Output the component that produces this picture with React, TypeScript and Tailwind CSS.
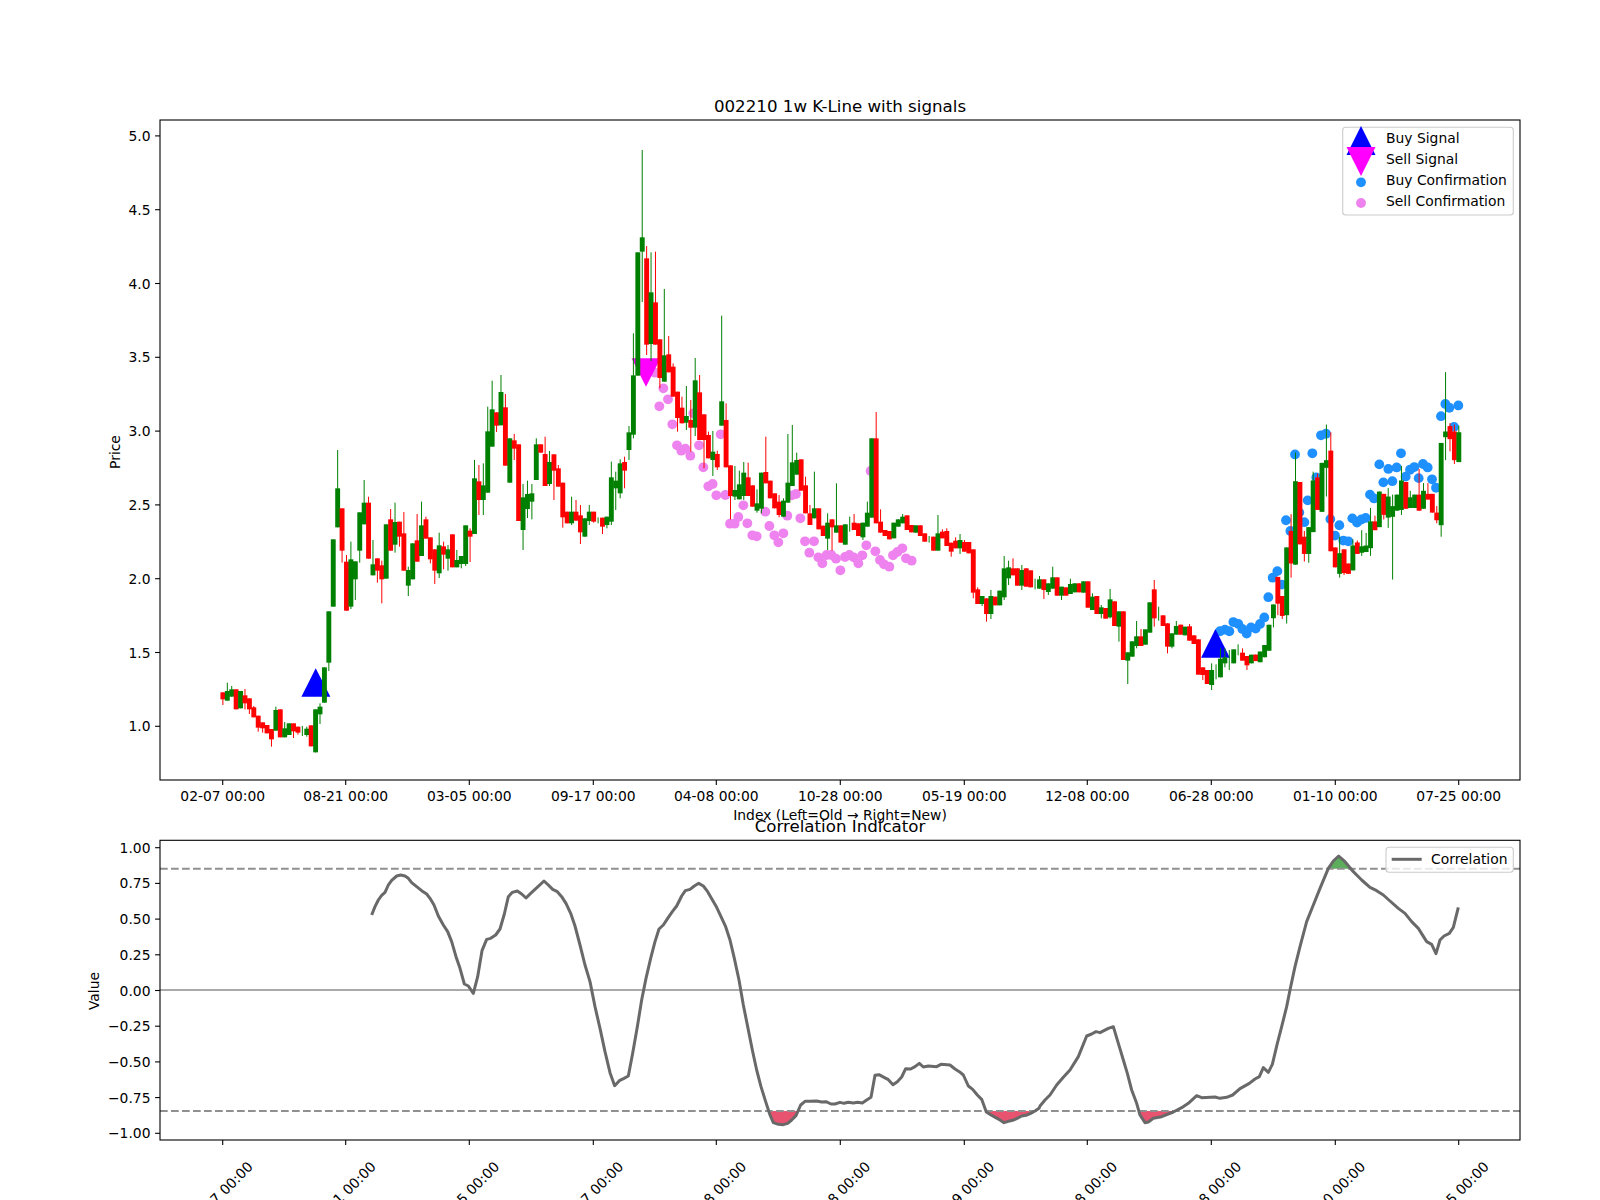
/**
 * Chart page: weekly K-line with signals, correlation indicator below
 * Readings are taken from crops, hence the origin/scale on each block
 */
import React from 'react'

type Candle = [string, number, number, number?, number?]

interface CandleBlock {
  y0: number
  sy: number
  rows: Candle[]
}

const PLOT_LEFT = 160
const PLOT_RIGHT = 1520
const FIRST_X = 222.9
const STEP_X = 4.414

const TICK_LABELS = [
  '02-07 00:00',
  '08-21 00:00',
  '03-05 00:00',
  '09-17 00:00',
  '04-08 00:00',
  '10-28 00:00',
  '05-19 00:00',
  '12-08 00:00',
  '06-28 00:00',
  '01-10 00:00',
  '07-25 00:00',
]
const TICK_XS = [222.7, 345.7, 469.3, 593.3, 716.3, 840.3, 964.3, 1087.3, 1211.3, 1335.3, 1458.7]

const PRICE_TICKS = ['1.0', '1.5', '2.0', '2.5', '3.0', '3.5', '4.0', '4.5', '5.0']
const CORR_TICKS = ['1.00', '0.75', '0.50', '0.25', '0.00', '−0.25', '−0.50', '−0.75', '−1.00']

const BLOCKS: CandleBlock[] = [
  {
    y0: 340,
    sy: 3,
    rows: [
      ['r', 1057, 1078, 0, 1095], ['g', 1053, 1082, 1028], ['g', 1048, 1070, 1038], ['r', 1048, 1108],
      ['g', 1053, 1105], ['r', 1066, 1090, 1047, 1108], ['r', 1075, 1108, 0, 1122], ['r', 1102, 1132, 1098],
      ['r', 1127, 1163, 0, 1175], ['r', 1147, 1165, 0, 1178], ['r', 1155, 1180], ['r', 1167, 1198, 0, 1220],
      ['g', 1110, 1172, 1100], ['r', 1108, 1192], ['g', 1165, 1192, 1146], ['g', 1150, 1185],
      ['r', 1150, 1174, 0, 1194], ['r', 1160, 1178, 0, 1184], ['g', 1175, 1175, 1158, 1188], ['g', 1166, 1185, 1160, 1190],
      ['r', 1156, 1219], ['g', 1108, 1237], ['g', 1100, 1123, 1090, 1152], ['g', 982, 1088],
      ['g', 814, 968, 0, 993], ['g', 598, 800], ['g', 445, 562, 330], ['r', 505, 632, 0, 668],
      ['r', 665, 812, 645], ['g', 658, 800, 605, 807], ['g', 664, 718, 0, 780], ['g', 517, 632, 0, 668],
      ['g', 488, 553, 420], ['r', 488, 656, 470], ['g', 673, 706, 600], ['r', 655, 692, 0, 728],
      ['r', 676, 718, 662, 790], ['g', 553, 716], ['r', 538, 632, 507], ['g', 546, 614, 488, 638],
      ['r', 545, 590, 0, 620], ['r', 580, 692, 516], ['g', 690, 737, 680, 768], ['g', 610, 718],
      ['r', 601, 665, 522], ['g', 556, 648, 485], ['r', 538, 596, 530], ['r', 592, 658, 0, 670],
      ['r', 628, 692, 0, 732], ['g', 616, 700, 578, 714], ['r', 619, 644, 605, 688], ['g', 628, 656, 615, 692],
      ['r', 583, 682], ['g', 660, 682, 630], ['g', 648, 672, 0, 685], ['g', 556, 672, 0, 678],
      ['r', 572, 590, 565, 666], ['g', 415, 582, 360], ['r', 424, 480, 375, 525], ['g', 436, 480, 370, 525],
      ['g', 274, 458, 200], ['g', 208, 320, 122], ['r', 217, 257, 0, 276], ['g', 156, 256, 105],
      ['r', 202, 377, 162], ['g', 295, 428], ['r', 301, 326, 282, 360], ['r', 313, 543],
      ['g', 472, 570, 432, 630], ['g', 462, 507, 422, 534], ['g', 460, 485, 432, 538], ['g', 313, 420, 295],
    ],
  },
  {
    y0: 130,
    sy: 3,
    rows: [
      ['r', 943, 968], ['r', 972, 1068, 920], ['g', 996, 1062, 963, 1068], ['r', 973, 1022, 0, 1110],
      ['r', 1015, 1070, 1005], ['r', 1058, 1162, 0, 1193], ['r', 1145, 1180], ['g', 1145, 1180, 1100, 1185],
      ['r', 1145, 1172, 1110], ['r', 1156, 1207, 1125, 1242], ['g', 1165, 1220], ['g', 1145, 1173, 1125, 1185],
      ['r', 1145, 1175, 0, 1178], ['g', 1170, 1170, 1162, 1180], ['r', 1163, 1190, 0, 1212], ['g', 1160, 1185, 0, 1195],
      ['g', 1042, 1175, 995, 1185], ['g', 1052, 1075, 1025, 1140], ['g', 1000, 1090, 988, 1105], ['r', 996, 1022, 980, 1075],
      ['g', 907, 960, 888, 990], ['g', 736, 914, 610, 925], ['g', 367, 737], ['g', 322, 365, 60, 516],
      ['r', 385, 644, 348, 675], ['g', 487, 642, 367, 693], ['r', 517, 644, 365], ['r', 628, 744, 0, 775],
      ['g', 676, 755, 477], ['r', 673, 727, 618], ['r', 710, 800, 700], ['r', 785, 864, 0, 905],
      ['r', 833, 880, 800], ['g', 858, 878, 768, 900], ['r', 870, 893, 810, 965], ['g', 751, 893, 684, 918],
      ['r', 787, 930, 735], ['r', 853, 930, 0, 1015], ['r', 915, 985, 905], ['g', 965, 990, 903, 1038],
      ['r', 972, 1012, 962, 1020], ['g', 814, 887, 557], ['r', 870, 1012, 820], ['r', 1006, 1098, 0, 1168],
      ['g', 1080, 1100, 1008, 1110], ['g', 1063, 1108, 1022], ['g', 1028, 1098, 996, 1110], ['r', 1042, 1098, 998],
      ['r', 1066, 1130], ['g', 1120, 1142, 1078, 1148], ['g', 1028, 1136, 0, 1150], ['r', 1026, 1060, 920],
      ['r', 1052, 1105], ['r', 1090, 1135], ['r', 1115, 1155, 1095, 1162], ['g', 1112, 1160, 1105],
      ['g', 1058, 1118, 912], ['g', 997, 1068, 885], ['g', 990, 1034, 968], ['r', 988, 1082],
      ['r', 1066, 1150, 1040], ['r', 1150, 1185, 1125], ['g', 1135, 1165, 1025], ['r', 1135, 1198],
      ['r', 1187, 1218], ['g', 1178, 1226, 1150, 1260], ['r', 1168, 1192, 0, 1262], ['g', 1186, 1208, 1060],
      ['r', 1186, 1238], ['g', 1183, 1244], ['g', 1180, 1180, 1160, 1205], ['r', 1178, 1200, 1152],
      ['r', 1180, 1218], ['g', 1178, 1222, 0, 1230], ['g', 1148, 1190, 1115], ['g', 925, 1163],
      ['r', 925, 1180, 846], ['r', 1175, 1208, 1138], ['r', 1200, 1218], ['r', 1203, 1228],
      ['g', 1178, 1225], ['g', 1168, 1190], ['g', 1160, 1180, 1152], ['r', 1156, 1200],
      ['r', 1185, 1207], ['g', 1186, 1208], ['r', 1186, 1218], ['r', 1210, 1235],
      ['g', 1228, 1228, 1218, 1238], ['r', 1220, 1262], ['g', 1210, 1262, 1155],
    ],
  },
  {
    y0: 430,
    sy: 3,
    rows: [
      ['r', 305, 325, 298], ['r', 303, 348, 295], ['r', 338, 365, 0, 380], ['r', 332, 355, 322],
      ['g', 330, 355, 312, 372], ['r', 336, 365, 330], ['r', 336, 370], ['r', 358, 488, 0, 505],
      ['r', 478, 522, 472], ['g', 498, 522, 0, 528], ['r', 505, 552, 0, 575], ['g', 498, 552, 480, 567],
      ['r', 500, 526], ['g', 482, 526], ['g', 415, 502, 378, 510], ['g', 412, 445, 392, 465],
      ['r', 415, 436, 385], ['r', 415, 467], ['g', 420, 467, 405, 480], ['r', 415, 470],
      ['r', 421, 472], ['g', 462, 462, 446, 478], ['g', 448, 476, 438], ['r', 448, 480, 0, 507],
      ['g', 460, 486, 0, 495], ['g', 442, 476, 410], ['r', 442, 497], ['g', 470, 497, 0, 510],
      ['r', 472, 497], ['g', 462, 492, 446], ['g', 460, 487], ['r', 460, 487],
      ['g', 454, 488], ['r', 454, 533], ['g', 500, 540, 490], ['r', 498, 552],
      ['g', 532, 552, 525, 565], ['r', 534, 566], ['g', 508, 562, 477, 565], ['r', 514, 588],
      ['g', 544, 590, 0, 635], ['r', 544, 690], ['g', 667, 692, 0, 762], ['g', 634, 680],
      ['g', 619, 648, 573, 655], ['r', 619, 648, 597], ['g', 598, 644], ['g', 517, 608],
      ['r', 478, 565, 450, 590], ['g', 550, 550, 530, 572], ['r', 556, 588], ['r', 580, 650, 0, 670],
      ['g', 610, 650, 0, 655], ['g', 588, 614, 573], ['r', 584, 614], ['g', 590, 616],
      ['r', 589, 632, 582], ['r', 616, 642], ['r', 628, 734], ['r', 712, 735, 0, 750],
      ['r', 720, 762], ['g', 720, 765, 700, 780], ['g', 725, 725, 703, 748], ['g', 686, 742, 655],
      ['g', 682, 700, 655, 712], ['g', 690, 690, 660, 720], ['g', 658, 700], ['g', 660, 660, 643, 676],
      ['r', 668, 692, 655], ['r', 678, 706, 0, 720], ['g', 674, 700],
    ],
  },
  {
    y0: 110,
    sy: 2.613,
    rows: [
      ['r', 1423, 1440], ['g', 1415, 1443], ['g', 1398, 1430], ['g', 1345, 1413],
      ['g', 1292, 1328, 0, 1352], ['r', 1220, 1290, 0, 1320], ['r', 1270, 1322, 0, 1330], ['g', 1143, 1320, 0, 1342],
      ['r', 1100, 1185, 1056, 1222], ['g', 970, 1188, 895], ['r', 972, 1135], ['r', 1115, 1160, 1100, 1180],
      ['g', 1090, 1160, 0, 1183], ['g', 968, 1103, 945], ['r', 960, 1045, 950], ['g', 922, 1050],
      ['g', 915, 935, 822, 1010], ['r', 890, 1153, 842], ['r', 1143, 1195], ['g', 1158, 1212, 1115, 1222],
      ['r', 1148, 1210, 0, 1215], ['r', 1185, 1212], ['g', 1138, 1203, 1122], ['r', 1130, 1160, 1125],
      ['g', 1140, 1157, 1098, 1165], ['g', 1138, 1155, 1105], ['g', 1075, 1145, 1040, 1165], ['r', 1075, 1098, 1060],
      ['g', 997, 1090], ['r', 1003, 1058, 0, 1070], ['g', 1010, 1065, 988, 1092], ['g', 1035, 1063, 1005, 1227],
      ['g', 1005, 1047], ['g', 968, 1045, 930, 1058], ['r', 972, 1042], ['g', 1012, 1040, 995],
      ['g', 1005, 1040], ['r', 1005, 1047, 938], ['g', 995, 1042, 975], ['r', 1003, 1018, 975],
      ['r', 1003, 1052], ['r', 1052, 1072, 1035, 1080], ['g', 870, 1085, 0, 1115], ['g', 840, 855, 685, 915],
      ['r', 826, 860, 818, 892], ['r', 840, 915, 822, 925], ['g', 842, 920, 825],
    ],
  },
]

const BUY_DOTS: [number, number][] = [
  [60, 1362], [75, 1358], [88, 1362], [100, 1338], [115, 1343], [127, 1356], [140, 1368], [153, 1352], [167, 1355],
  [180, 1343], [193, 1326], [205, 1273], [218, 1222], [232, 1205], [245, 1240], [258, 1072], [271, 1100], [285, 900],
  [298, 1052], [313, 1077], [323, 1020], [337, 897], [349, 960], [363, 850], [378, 846], [391, 1069], [405, 1112],
  [418, 1085], [430, 1125], [445, 1127], [457, 1067], [471, 1078], [484, 1070], [497, 1066], [510, 1005], [522, 1015],
  [538, 926], [550, 973], [565, 938], [577, 970], [590, 934], [603, 897], [617, 958], [630, 940], [643, 933],
  [656, 962], [669, 925], [683, 934], [696, 965], [708, 987], [723, 800], [736, 768], [748, 778], [762, 828], [775, 772],
]

const SELL_DOTS: [number, number][] = [
  [345, 728], [370, 775], [384, 808], [358, 829], [397, 883], [460, 850], [411, 946], [424, 962], [436, 956],
  [451, 977], [477, 946], [542, 913], [490, 1012], [505, 1069], [518, 1062], [529, 1096], [556, 1095], [570, 1181],
  [584, 1181], [595, 1161], [622, 1180], [610, 1126], [637, 1216], [650, 1219], [676, 1145], [688, 1188], [703, 1216],
  [730, 1210], [715, 1237], [742, 1157], [768, 1092], [755, 1096], [781, 1165], [795, 1234], [822, 1234], [808, 1268],
  [835, 1282], [847, 1300], [860, 1275], [874, 1275], [888, 1286], [901, 1321], [915, 1281], [928, 1275], [941, 1282],
  [955, 1300], [967, 1276], [979, 1246], [992, 1023], [1006, 1264], [1020, 1290], [1032, 1303], [1048, 1310],
  [1059, 1276], [1072, 1266], [1087, 1255], [1098, 1285], [1115, 1292],
]

// Correlation line, one list per crop
const CORR_A: [number, number][] = [
  [875, 435], [885, 410], [895, 390], [905, 376], [915, 367], [925, 345], [935, 331], [950, 318], [962, 315], [975, 318],
  [985, 325], [995, 338], [1010, 350], [1025, 362], [1040, 372], [1050, 385], [1062, 405], [1075, 438], [1090, 465],
  [1103, 485], [1115, 515], [1128, 560], [1140, 595], [1153, 642], [1165, 648], [1180, 670], [1193, 620], [1206, 542],
  [1220, 508], [1232, 505], [1247, 495], [1260, 477], [1273, 432], [1285, 380], [1297, 367], [1312, 363], [1325, 372],
  [1338, 384], [1352, 370], [1365, 358], [1392, 333], [1405, 345], [1418, 358], [1432, 365], [1445, 380], [1458, 400],
  [1472, 430], [1485, 468], [1500, 525],
]
const CORR_B: [number, number][] = [
  [75, 405], [90, 455], [105, 530], [120, 595], [135, 665], [150, 728], [164, 767], [178, 752], [192, 745], [205, 738],
  [218, 670], [232, 590], [245, 510], [258, 445], [272, 385], [285, 335], [297, 297], [310, 285], [323, 265], [337, 245],
  [350, 228], [365, 198], [376, 182], [390, 178], [403, 168], [416, 160], [430, 168], [443, 185], [456, 208], [470, 232],
  [483, 260], [497, 290], [510, 330], [523, 385], [537, 450], [550, 525], [563, 590], [577, 660], [590, 720], [603, 770],
  [617, 815], [630, 855], [640, 878], [655, 883], [670, 884], [683, 880], [695, 870], [708, 857], [722, 825], [735, 814],
  [750, 814], [770, 813], [785, 816], [798, 815], [813, 822], [825, 822], [840, 817], [852, 820], [865, 817], [880, 819],
  [893, 817], [907, 819], [920, 810], [933, 802], [945, 736], [957, 734], [972, 742], [985, 749], [999, 764], [1012, 755],
  [1025, 741], [1037, 716], [1052, 717], [1065, 710], [1078, 700], [1090, 711], [1105, 708], [1130, 710], [1143, 703],
  [1170, 705], [1185, 717], [1198, 725], [1210, 735], [1225, 768], [1238, 778], [1252, 795], [1265, 808], [1279, 846],
  [1293, 855], [1306, 862], [1320, 870], [1332, 878], [1345, 874], [1358, 871], [1370, 866], [1385, 858], [1398, 856],
  [1412, 850], [1425, 843], [1437, 835],
]
const CORR_C: [number, number][] = [
  [0, 828], [15, 810], [30, 795], [50, 765], [70, 742], [90, 720], [115, 680], [140, 618], [155, 612], [168, 605],
  [180, 608], [205, 595], [220, 590], [235, 640], [250, 690], [262, 730], [275, 780], [290, 820], [300, 855], [315, 878],
  [325, 876], [340, 865], [365, 860], [400, 846], [425, 833], [445, 820], [470, 797], [485, 803], [525, 801], [540, 805],
  [560, 802], [578, 795], [600, 776], [628, 760], [645, 747], [658, 740], [670, 713], [685, 727], [697, 703], [712, 640],
  [725, 590], [740, 530], [750, 480], [765, 410], [780, 350], [800, 275], [820, 225], [840, 175], [865, 115], [880, 93],
  [896, 78], [915, 95], [940, 125], [965, 150], [990, 172], [1010, 182], [1030, 195], [1050, 213], [1075, 235],
  [1095, 250], [1115, 275], [1135, 295], [1160, 335], [1175, 343], [1188, 371], [1200, 330], [1212, 318], [1228, 310],
  [1240, 292], [1255, 232],
]

const CORR_LINE: [number, number][] = [
  ...CORR_A.map(([x, y]): [number, number] => [80 + x / 3, 770 + y / 3]),
  ...CORR_B.map(([x, y]): [number, number] => [560 + x / 3, 830 + y / 3]),
  ...CORR_C.map(([x, y]): [number, number] => [1040 + x / 3, 830 + y / 3]),
]

const UPPER_Y = 868.7
const LOWER_Y = 1111

// Parts of the line beyond a threshold, closed along the threshold
function beyond(points: [number, number][], level: number, sign: number) {
  const regions: string[] = []
  let current: string[] = []
  points.forEach(([x, y], i) => {
    const isOut = (y - level) * sign > 0
    if (i > 0) {
      const [px, py] = points[i - 1]
      const wasOut = (py - level) * sign > 0
      if (isOut !== wasOut) {
        const cx = px + ((level - py) / (y - py)) * (x - px)
        current.push(`${cx},${level}`)
        if (wasOut) {
          regions.push(current.join(' '))
          current = []
        }
      }
    }
    if (isOut) current.push(`${x},${y}`)
  })
  return regions
}

function Candles() {
  let index = 0
  return (
    <g>
      {BLOCKS.flatMap((block) =>
        block.rows.map(([color, top, bottom, wickTop, wickBottom]) => {
          const x = FIRST_X + STEP_X * index
          const key = index
          index += 1
          const toY = (v: number) => block.y0 + v / block.sy
          const fill = color === 'r' ? '#ff0000' : '#008000'
          const y1 = toY(wickTop || top)
          const y2 = toY(wickBottom || bottom)
          return (
            <g key={key}>
              <line x1={x} x2={x} y1={y1} y2={y2} stroke={fill} strokeWidth={1} />
              {bottom > top && <rect x={x - 2.45} width={4.9} y={toY(top)} height={toY(bottom) - toY(top)} fill={fill} />}
            </g>
          )
        }),
      )}
    </g>
  )
}

function XTicks({ y }: { y: number }) {
  return (
    <g>
      {TICK_XS.map((x) => (
        <line key={x} x1={x} x2={x} y1={y} y2={y + 4.9} stroke="#000" strokeWidth={1.1} />
      ))}
    </g>
  )
}

function YTicks({ labels, first, step }: { labels: string[]; first: number; step: number }) {
  return (
    <g>
      {labels.map((label, i) => {
        const y = first + step * i
        return (
          <g key={label}>
            <line x1={PLOT_LEFT - 4.9} x2={PLOT_LEFT} y1={y} y2={y} stroke="#000" strokeWidth={1.1} />
            <text x={150.5} y={y + 5} textAnchor="end">
              {label}
            </text>
          </g>
        )
      })}
    </g>
  )
}

function PriceChart() {
  return (
    <svg width={1600} height={840} viewBox="0 0 1600 840" className="block">
      <text x={840} y={112} textAnchor="middle" className="text-[16.67px]">
        002210 1w K-Line with signals
      </text>

      {SELL_DOTS.map(([x, y]) => (
        <circle key={`${x}-${y}`} cx={540 + x / 3} cy={130 + y / 3} r={4.9} fill="#ee82ee" />
      ))}
      {BUY_DOTS.map(([x, y]) => (
        <circle key={`${x}-${y}`} cx={1200 + x / 3} cy={110 + y / 2.613} r={4.9} fill="#1e90ff" />
      ))}
      <polygon points="315.7,668.3 301.4,696.7 330.4,696.7" fill="#0000ff" />
      <polygon points="1215.4,629 1201.1,657.7 1229.9,657.7" fill="#0000ff" />
      <polygon points="631.6,358.3 660.5,358.3 646,386.7" fill="#ff00ff" />

      <Candles />

      <rect x={PLOT_LEFT} y={120} width={PLOT_RIGHT - PLOT_LEFT} height={660} fill="none" stroke="#000" strokeWidth={1.1} />
      <XTicks y={780} />
      <YTicks labels={PRICE_TICKS} first={726.3} step={-73.8} />
      <text x={115} y={452} textAnchor="middle" dominantBaseline="central" transform="rotate(-90 115 452)">
        Price
      </text>
      {TICK_LABELS.map((label, i) => (
        <text key={label} x={TICK_XS[i]} y={801} textAnchor="middle">
          {label}
        </text>
      ))}
      <text x={840} y={820} textAnchor="middle">
        Index (Left=Old → Right=New)
      </text>

      {/* Legend */}
      <rect x={1342.7} y={127.2} width={170.6} height={87.8} rx={3} fill="#ffffff" fillOpacity={0.8} stroke="#cccccc" strokeWidth={1.1} />
      <polygon points="1361,126 1346.5,155 1375.5,155" fill="#0000ff" />
      <polygon points="1346.5,147 1375.5,147 1361,176" fill="#ff00ff" />
      <circle cx={1361} cy={182.3} r={4.9} fill="#1e90ff" />
      <circle cx={1361} cy={203} r={4.9} fill="#ee82ee" />
      <text x={1386} y={143}>Buy Signal</text>
      <text x={1386} y={164}>Sell Signal</text>
      <text x={1386} y={185}>Buy Confirmation</text>
      <text x={1386} y={206}>Sell Confirmation</text>
    </svg>
  )
}

function CorrelationChart() {
  const line = CORR_LINE.map(([x, y]) => `${x},${y}`).join(' ')
  return (
    <svg width={1600} height={360} viewBox="0 840 1600 360" className="block overflow-visible">
      <text x={840} y={832} textAnchor="middle" className="text-[16.67px]">
        Correlation Indicator
      </text>

      {beyond(CORR_LINE, LOWER_Y, 1).map((points) => (
        <polygon key={points} points={points} fill="#e8536f" />
      ))}
      {beyond(CORR_LINE, UPPER_Y, -1).map((points) => (
        <polygon key={points} points={points} fill="#5cae5c" />
      ))}
      <line x1={PLOT_LEFT} x2={PLOT_RIGHT} y1={UPPER_Y} y2={UPPER_Y} stroke="#909090" strokeWidth={2} strokeDasharray="7.7 3.3" />
      <line x1={PLOT_LEFT} x2={PLOT_RIGHT} y1={LOWER_Y} y2={LOWER_Y} stroke="#909090" strokeWidth={2} strokeDasharray="7.7 3.3" />
      <line x1={PLOT_LEFT} x2={PLOT_RIGHT} y1={990} y2={990} stroke="#aaaaaa" strokeWidth={2} />
      <polyline points={line} fill="none" stroke="#696969" strokeWidth={3} strokeLinejoin="round" />

      <rect x={PLOT_LEFT} y={840.3} width={PLOT_RIGHT - PLOT_LEFT} height={299.7} fill="none" stroke="#000" strokeWidth={1.1} />
      <XTicks y={1140} />
      <YTicks labels={CORR_TICKS} first={847.7} step={35.7} />
      <text x={94} y={991} textAnchor="middle" dominantBaseline="central" transform="rotate(-90 94 991)">
        Value
      </text>
      {TICK_LABELS.map((label, i) => (
        <text
          key={label}
          x={TICK_XS[i] - 2.5}
          y={1194}
          textAnchor="middle"
          dominantBaseline="central"
          transform={`rotate(-45 ${TICK_XS[i] - 2.5} 1194)`}
        >
          {label}
        </text>
      ))}

      {/* Legend */}
      <rect x={1386} y={847.3} width={127.3} height={25} rx={3} fill="#ffffff" fillOpacity={0.8} stroke="#cccccc" strokeWidth={1.1} />
      <line x1={1391.7} x2={1421.7} y1={859.3} y2={859.3} stroke="#696969" strokeWidth={3} />
      <text x={1431} y={863.5}>Correlation</text>
    </svg>
  )
}

export default function App() {
  return (
    <div className="w-[1600px] h-[1200px] overflow-hidden bg-white font-['DejaVu_Sans',sans-serif] text-[13.89px] text-black">
      <PriceChart />
      <CorrelationChart />
    </div>
  )
}
